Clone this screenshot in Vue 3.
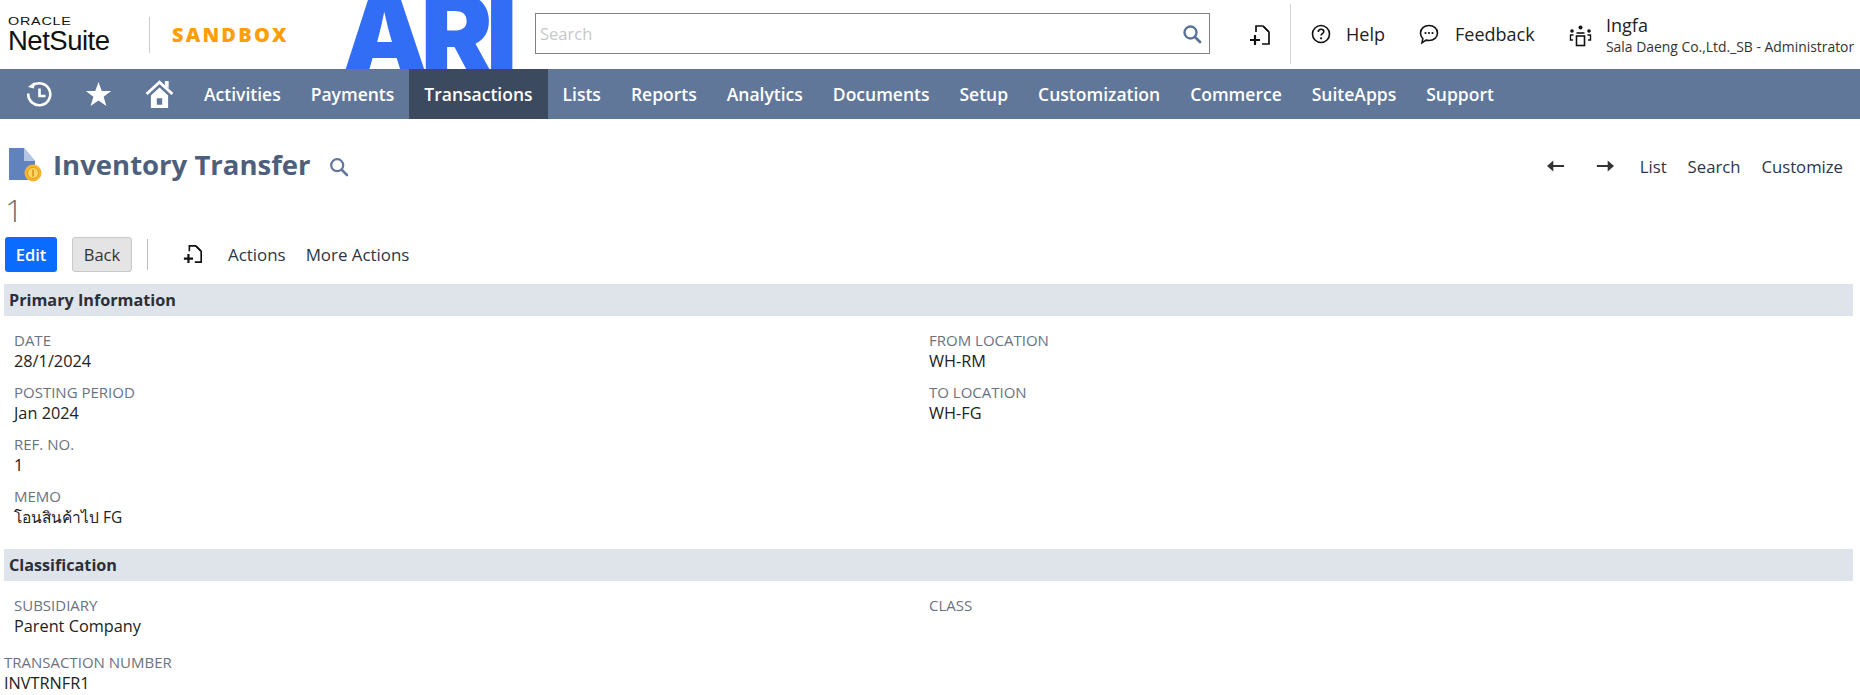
<script setup>
const navItems = [
  { label: 'Activities' }, { label: 'Payments' }, { label: 'Transactions', active: true },
  { label: 'Lists' }, { label: 'Reports' }, { label: 'Analytics' }, { label: 'Documents' },
  { label: 'Setup' }, { label: 'Customization' }, { label: 'Commerce' }, { label: 'SuiteApps' }, { label: 'Support' }
]
const primaryLeft = [
  { label: 'DATE', value: '28/1/2024' },
  { label: 'POSTING PERIOD', value: 'Jan 2024' },
  { label: 'REF. NO.', value: '1' },
  { label: 'MEMO', value: 'โอนสินค้าไป FG', thai: true }
]
const primaryRight = [
  { label: 'FROM LOCATION', value: 'WH-RM' },
  { label: 'TO LOCATION', value: 'WH-FG' }
]
</script>

<template>
  <div class="page">
    <header class="top">
      <div class="brand">
        <div class="oracle">ORACLE</div>
        <div class="netsuite">NetSuite</div>
      </div>
      <div class="brand-sep"></div>
      <div class="sandbox">SANDBOX</div>
      <div class="ari">ARI</div>
      <div class="search">
        <span class="search-ph">Search</span>
        <svg class="search-ic" width="20" height="20" viewBox="0 0 20 20"><circle cx="8.5" cy="8.5" r="6" fill="none" stroke="#5a7299" stroke-width="2.4"/><path d="M13 13l5 5" stroke="#5a7299" stroke-width="2.8" stroke-linecap="round"/></svg>
      </div>
      <svg class="newdoc" width="22" height="24" viewBox="0 0 22 24"><path d="M7 9V3h7l6 6v12h-7" fill="none" stroke="#111" stroke-width="1.7"/><path d="M14.500 3.500l5 5" stroke="#111" stroke-width="1.7"/><path d="M1 17h10M6 12v10" stroke="#111" stroke-width="2.200"/></svg>
      <div class="top-sep"></div>
      <div class="top-link help">
        <svg width="20" height="20" viewBox="0 0 20 20"><circle cx="10" cy="10" r="8.500" fill="none" stroke="#111" stroke-width="1.600"/><path d="M7.300 8c0-1.700 1.200-2.700 2.800-2.700s2.700 1 2.700 2.300c0 2-2.700 2-2.700 4" fill="none" stroke="#111" stroke-width="1.600"/><circle cx="10.100" cy="14.300" r="1.100" fill="#111"/></svg>
        <span>Help</span>
      </div>
      <div class="top-link feedback">
        <svg width="22" height="22" viewBox="0 0 22 22"><path d="M11 2.500c4.800 0 8.500 3.300 8.500 7.500s-3.700 7.500-8.500 7.500c-1 0-2-.2-2.900-.4L4 19.800l.8-4.200C3.300 14.200 2.500 12.200 2.500 10c0-4.200 3.700-7.500 8.500-7.500z" fill="none" stroke="#111" stroke-width="1.600"/><circle cx="7.500" cy="10" r="1.100" fill="#111"/><circle cx="11" cy="10" r="1.100" fill="#111"/><circle cx="14.500" cy="10" r="1.100" fill="#111"/></svg>
        <span>Feedback</span>
      </div>
      <div class="user">
        <svg class="user-ic" width="23" height="24" viewBox="0 0 22 24"><circle cx="11" cy="3.500" r="2" fill="#111"/><circle cx="2.500" cy="7" r="1.800" fill="#111"/><circle cx="19.500" cy="7" r="1.800" fill="#111"/><rect x="7" y="12" width="8" height="9.500" fill="none" stroke="#111" stroke-width="1.600"/><path d="M7 9h8" stroke="#111" stroke-width="1.600"/><path d="M3.500 16H1v-5h3M18.500 16H21v-5h-3" fill="none" stroke="#111" stroke-width="1.400"/></svg>
        <div class="user-text">
          <div class="user-name">Ingfa</div>
          <div class="user-role">Sala Daeng Co.,Ltd._SB - Administrator</div>
        </div>
      </div>
    </header>

    <nav class="nav">
      <div class="nav-icons">
        <svg width="26" height="29" viewBox="0 0 26 28"><path d="M6 5.500A11 11 0 1 1 2.300 13" fill="none" stroke="#fff" stroke-width="2.600"/><path d="M8.500 1.500L8 8 2 6.500z" fill="#fff"/><path d="M13.500 8v7.500h6" fill="none" stroke="#fff" stroke-width="2.600"/></svg>
        <svg width="27" height="26" viewBox="0 0 24 24"><path d="M12 1l3 8.200h8.700l-7 5.300 2.600 8.500L12 18l-7.300 5 2.600-8.500-7-5.300H9z" fill="#fff"/></svg>
        <svg width="29" height="28" viewBox="0 0 26 26"><path d="M1 13L13 2l12 11" fill="none" stroke="#fff" stroke-width="2.600"/><path d="M18 1h3.500v7L18 5z" fill="#fff"/><path fill-rule="evenodd" d="M5 14.500L13 7l8 7.500V26H5zM10.500 17v6h5v-6z" fill="#fff"/></svg>
      </div>
      <a v-for="item in navItems" :key="item.label" class="nav-item" :class="{ active: item.active }">{{ item.label }}</a>
    </nav>

    <main class="content">
      <div class="title-row">
        <svg class="title-ic" width="36" height="36" viewBox="0 0 36 36">
          <path d="M1 1h15l11 13v19H1z" fill="#6183bd"/>
          <path d="M16 1l11 13H16z" fill="#b4c6e3"/>
          <circle cx="25" cy="26" r="8.500" fill="#f5b52c"/>
          <circle cx="25" cy="26" r="5.500" fill="#fcd569" stroke="#e49c1b" stroke-width="1"/>
          <path d="M25 22.500v7" stroke="#d88f15" stroke-width="1.500"/>
        </svg>
        <h1 class="title">Inventory Transfer</h1>
        <svg class="title-search" width="20" height="20" viewBox="0 0 20 20"><circle cx="8.200" cy="8.200" r="6" fill="none" stroke="#607799" stroke-width="2.200"/><path d="M12.800 12.800l5.200 5.200" stroke="#607799" stroke-width="2.600" stroke-linecap="round"/></svg>
        <div class="page-links">
          <svg width="18" height="12" viewBox="0 0 20 12"><path d="M19 6H6" stroke="#333" stroke-width="2.200"/><path d="M7 0L0 6l7 6z" fill="#333"/></svg>
          <svg class="next" width="18" height="12" viewBox="0 0 20 12"><path d="M1 6h13" stroke="#333" stroke-width="2.200"/><path d="M13 0l7 6-7 6z" fill="#333"/></svg>
          <a class="pl list">List</a>
          <a class="pl">Search</a>
          <a class="pl">Customize</a>
        </div>
      </div>
      <div class="record-id">1</div>
      <div class="actions">
        <button class="btn btn-primary">Edit</button>
        <button class="btn btn-secondary">Back</button>
        <div class="act-sep"></div>
        <svg class="act-new" width="20" height="22" viewBox="0 0 22 24"><path d="M7 9V3h7l6 6v12h-7" fill="none" stroke="#111" stroke-width="1.800"/><path d="M14.500 3.500l5 5" stroke="#111" stroke-width="1.800"/><path d="M1 17h10M6 12v10" stroke="#111" stroke-width="2.400"/></svg>
        <a class="act first">Actions</a>
        <a class="act">More Actions</a>
      </div>

      <section class="sec-bar">Primary Information</section>
      <div class="grid grid-primary">
        <div class="col">
          <div v-for="f in primaryLeft" :key="f.label" class="field">
            <div class="lbl">{{ f.label }}</div>
            <div class="val" :class="{ thai: f.thai }">{{ f.value }}</div>
          </div>
        </div>
        <div class="col">
          <div v-for="f in primaryRight" :key="f.label" class="field">
            <div class="lbl">{{ f.label }}</div>
            <div class="val">{{ f.value }}</div>
          </div>
        </div>
      </div>

      <section class="sec-bar">Classification</section>
      <div class="grid classif">
        <div class="col">
          <div class="field">
            <div class="lbl">SUBSIDIARY</div>
            <div class="val">Parent Company</div>
          </div>
        </div>
        <div class="col">
          <div class="field">
            <div class="lbl">CLASS</div>
          </div>
        </div>
      </div>
      <div class="field txn">
        <div class="lbl">TRANSACTION NUMBER</div>
        <div class="val">INVTRNFR1</div>
      </div>
    </main>
  </div>
</template>

<style>
html, body { margin: 0; background: #fff; overflow: hidden; }
</style>

<style scoped>
.page { width: 1860px; height: 695px; overflow: hidden; font-family: "Open Sans", "Noto Sans", sans-serif; color: #222; }
.top { height: 69px; display: flex; align-items: center; position: relative; overflow: hidden; }
.brand { margin-left: 8px; width: 120px; color: #111; }
.oracle { font-family: "Liberation Sans", sans-serif; font-size: 11.5px; line-height: 11px; letter-spacing: 0.6px; transform: scaleX(1.25); transform-origin: left; }
.netsuite { font-family: "Liberation Sans", sans-serif; font-size: 27.500px; line-height: 27px; letter-spacing: -0.5px; }
.brand-sep { width: 1px; height: 36px; background: #ccc; margin-left: 21px; }
.sandbox { margin-left: 22px; width: 172px; font-weight: 800; font-size: 20px; letter-spacing: 2.200px; color: #ff9d0a; flex: none; }
.ari { width: 180px; height: 69px; font-family: "Inter", sans-serif; font-weight: 900; font-size: 108px; line-height: 69px; letter-spacing: -7px; color: #316ef5; flex: none; margin-top: -2px; margin-left: -2px; }
.search { position: absolute; left: 535px; top: 13px; width: 675px; height: 41px; border: 1px solid #808080; display: flex; align-items: center; justify-content: space-between; padding: 0 5px 0 4px; box-sizing: border-box; }
.search-ph { font-size: 16.500px; color: #c8c8c8; }
.search-ic { margin-right: 2px; }
.newdoc { position: absolute; left: 1249px; top: 23px; }
.top-sep { position: absolute; left: 1290px; top: 4px; width: 1px; height: 60px; background: #d5d5d5; }
.top-link { display: flex; align-items: center; font-size: 18px; color: #222; position: absolute; top: 22px; }
.help { left: 1311px; gap: 15px; }
.feedback { left: 1418px; gap: 15px; }
.user { position: absolute; left: 1569px; top: 14px; display: flex; align-items: center; gap: 14px; }
.user-ic { margin-top: 2px; }
.user-name { font-size: 18px; line-height: 23px; color: #222; }
.user-role { font-size: 13.900px; line-height: 19px; color: #333; white-space: nowrap; }
.nav { height: 50px; background: #607799; display: flex; align-items: stretch; color: #fff; }
.nav-icons { display: flex; align-items: center; width: 189px; padding-left: 26px; gap: 33px; box-sizing: border-box; flex: none; }
.nav-item { display: flex; align-items: center; padding: 0 15px; font-size: 17.500px; font-weight: 600; color: #fff; white-space: nowrap; }
.nav-item.active { background: #3c4a5f; }
.title-row { display: flex; align-items: center; height: 42px; margin-top: 25px; position: relative; padding-left: 8px; }
.title-ic { margin-top: 0; }
.title { margin: 0 0 0 9px; font-size: 27.500px; font-weight: 700; color: #4d5f7d; line-height: 36px; white-space: nowrap; }
.title-search { margin-left: 18px; margin-top: 4px; }
.page-links { margin-left: auto; margin-top: 2px; display: flex; align-items: center; font-size: 16.700px; color: #2b3648; padding-right: 17px; }
.next { margin-left: 31px; }
.pl { margin-left: 21px; }
.pl.list { margin-left: 26px; }
.record-id { font-size: 32px; line-height: 36px; color: #6f6a68; font-weight: 300; padding-left: 5px; margin-top: 6px; }
.actions { display: flex; align-items: center; height: 36px; margin-top: 8px; padding-left: 5px; }
.btn { height: 35px; box-sizing: border-box; border-radius: 3px; font-family: inherit; font-size: 16.500px; padding: 0; }
.btn-primary { width: 52px; background: #0a6cff; color: #fff; border: 0; font-weight: 600; }
.btn-secondary { width: 60px; margin-left: 15px; background: #e4e4e4; color: #333; border: 1px solid #c8c8c8; font-weight: 400; }
.act-sep { width: 1px; height: 31px; background: #bbb; margin-left: 15px; }
.act-new { margin-left: 35px; }
.act { font-size: 16.900px; color: #2b3648; margin-left: 20px; }
.act.first { margin-left: 25px; }
.sec-bar { margin: 12px 7px 0 4px; height: 32px; background: #dfe3ea; font-size: 16.200px; font-weight: 700; line-height: 33px; padding-left: 5px; color: #2a2f38; }
.grid { display: flex; padding-left: 14px; }
.col { width: 915px; }
.grid-primary { padding-top: 14px; height: 221px; box-sizing: border-box; }
.classif { padding-top: 14px; height: 67px; box-sizing: border-box; }
.field { height: 52px; }
.lbl { font-size: 15px; line-height: 21px; color: #6b7280; }
.val { font-size: 16.300px; line-height: 21px; color: #222; }
.val.thai { font-size: 15.500px; }
.txn { padding-left: 4px; margin-top: 4px; }
</style>
